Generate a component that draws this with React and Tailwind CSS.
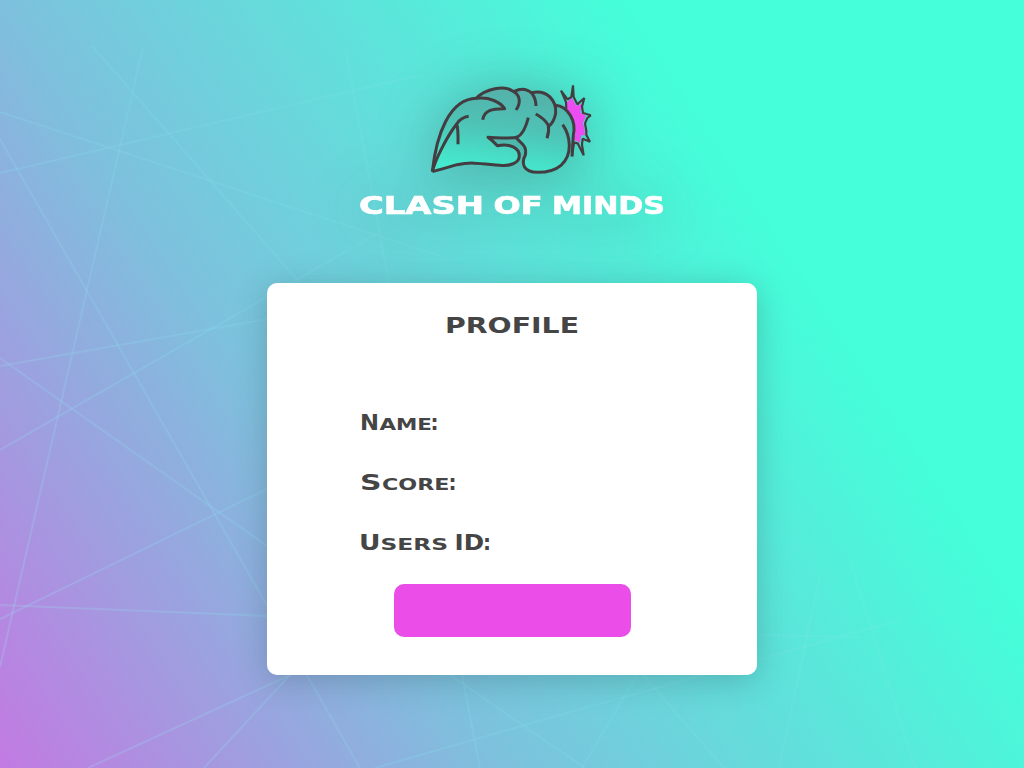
const TITLE = [
  { t: 'CLASH', x: 0, w: 125 },
  { t: 'OF', x: 134.5, w: 49 },
  { t: 'MINDS', x: 193, w: 113 },
];

const FIELDS = [
  { key: 'name', width: 78, runs: [
    { t: 'N', x: 0, w: 19, big: true }, { t: 'ame', x: 19.5, w: 52.5 }, { t: ':', x: 70.5, w: 8, big: true },
  ] },
  { key: 'score', width: 96, runs: [
    { t: 'S', x: 0, w: 21.5, big: true }, { t: 'core', x: 22, w: 67.5 }, { t: ':', x: 88.5, w: 8, big: true },
  ] },
  { key: 'id', width: 130, runs: [
    { t: 'U', x: -1, w: 21.5, big: true }, { t: 'sers', x: 20.5, w: 67.5 }, { t: 'ID', x: 94.5, w: 29.5, big: true }, { t: ':', x: 123, w: 8, big: true },
  ] },
];

const LINES = [
  [0, 112, 440, 256], [0, 173, 420, 75], [0, 139, 360, 768], [143, 47, 0, 667],
  [92, 46, 300, 283], [345, 47, 389, 283], [0, 450, 378, 233], [0, 366, 267, 319],
  [0, 358, 267, 546], [0, 619, 267, 489], [0, 605, 267, 616], [88, 768, 290, 675],
  [204, 768, 290, 675], [450, 675, 585, 768], [462, 675, 480, 768], [582, 768, 637, 675],
  [643, 675, 724, 768], [375, 768, 560, 715], [560, 715, 900, 620], [779, 768, 820, 575],
  [850, 560, 915, 768], [757, 635, 860, 637],
];

function Backdrop() {
  return (
    <svg className="absolute inset-0 h-full w-full" viewBox="0 0 1024 768" preserveAspectRatio="none" fill="none" aria-hidden="true">
      <defs>
        <linearGradient id="fade" gradientUnits="userSpaceOnUse" x1="0" y1="768" x2="870" y2="200">
          <stop offset="0" stopColor="#a8c4f0" stopOpacity="0.32" />
          <stop offset="0.5" stopColor="#7ad8e4" stopOpacity="0.34" />
          <stop offset="1" stopColor="#74f8df" stopOpacity="0.14" />
        </linearGradient>
      </defs>
      {LINES.map(([x1, y1, x2, y2], i) => (
        <line key={i} x1={x1} y1={y1} x2={x2} y2={y2} stroke="url(#fade)" strokeWidth="2" />
      ))}
    </svg>
  );
}

function BrainLogo() {
  return (
    <svg className="h-[110px] w-[190px] overflow-visible" viewBox="0 0 570 330" fill="none" aria-label="Clash of Minds">
      <defs>
        <linearGradient id="lobe" gradientUnits="userSpaceOnUse" x1="300" y1="40" x2="270" y2="285">
          <stop offset="0" stopColor="#55b0a9" />
          <stop offset="0.5" stopColor="#4ec3b6" />
          <stop offset="1" stopColor="#45e9cd" />
        </linearGradient>
      </defs>
      <path fill="#ed4df0" d="M439 99 438 84 456 69 469 92 486 86 481 112 498 123 489 143 494 166 495 181 483 181 480 203 465 195 460 200Q475 148 439 99Z" />
      <path
        fill="url(#lobe)"
        d="M37 290C52 180 86 76 170 70C195 43 255 29 283 49C302 37 328 44 340 52C376 42 404 64 410 91C450 95 465 145 458 190C457 255 420 293 353 292C309 291 303 265 316 236C320 213 303 202 289 189L204 187Q219 198 230 212C270 204 298 219 298 242C298 267 269 274 239 271C190 268 165 258 111 270Q75 280 37 290Z"
      />
      <g stroke="#433d41" strokeWidth="9" strokeLinecap="butt" strokeLinejoin="round">
        <path d="M37 290C49 180 87 72 170 70C210 66 240 81 254 101C216 100 193 107 188 134" />
        <path d="M37 290C47 250 82 183 110 147Q123 127 146 124M110 147Q115 160 114 208" />
        <path d="M167 71C199 39 253 32 276 47C302 59 303 84 288 105" />
        <path d="M283 49C305 38 323 43 336 55Q348 72 348 93M335 53C381 42 410 77 407 115Q402 142 387 153M347 117Q373 130 385 151Q388 169 381 190" />
        <path d="M406 91C447 94 469 142 460 180L456 244M428 149Q447 176 448 211C448 263 413 292 353 292C309 291 303 265 316 240C322 211 302 204 289 189" />
        <path d="M325 128C315 166 302 190 280 188Q242 191 204 187Q219 198 232 212C271 204 298 219 298 242C298 265 268 274 239 271C185 266 155 260 111 269Q75 280 37 290" />
      </g>
      <path stroke="#433d41" strokeWidth="6.5" strokeLinejoin="bevel" strokeLinecap="butt" d="M439 101 438 81 423 47 443 73 454 66 459 31 461 66 472 88 493 69 486 95 489 114 512 121 502 129 495 145 499 168 499 180 510 200 488 191 486 209 491 241 473 205 462 203 456 244" />
    </svg>
  );
}

function Words({ runs, size, smallSize, className }) {
  return runs.map((r) => (
    <text
      key={r.x}
      x={r.x}
      y="19"
      textLength={r.w}
      lengthAdjust="spacingAndGlyphs"
      fontSize={r.big || !smallSize ? size : smallSize}
      className={className}
    >
      {r.t}
    </text>
  ));
}

export default function App() {
  return (
    <div className="relative h-screen min-h-[768px] overflow-hidden bg-[linear-gradient(57deg,#c27ae2_0%,#7ec0dd_32.6%,#44ffd9_74%)] font-['DejaVu_Sans',sans-serif]">
      <Backdrop />
      <main className="relative flex flex-col items-center pt-[75px]">
        <header className="flex flex-col items-center drop-shadow-[0_4px_30px_rgba(50,50,50,0.36)]">
          <div className="pl-[6px]"><BrainLogo /></div>
          <h1 className="mt-[10px]">
            <svg className="block h-[24px] w-[306px] overflow-visible">
              <Words runs={TITLE} size={25} className="fill-white stroke-white stroke-[0.7px] font-bold" />
            </svg>
          </h1>
        </header>
        <section className="mt-[64px] flex h-[392px] w-[490px] flex-col items-center rounded-[10px] bg-white pt-[31px] shadow-[0_5px_32px_rgba(30,50,60,0.25)]">
          <h2>
            <svg className="block h-[24px] w-[132px] overflow-visible">
              <Words runs={[{ t: 'PROFILE', x: -1, w: 134 }]} size={20.5} className="fill-[#454545] font-bold" />
            </svg>
          </h2>
          <div className="mt-[73px] flex w-[304px] flex-col gap-[36px]">
            {FIELDS.map(({ key, width, runs }) => (
              <svg key={key} className="block h-[24px] overflow-visible" style={{ width }}>
                <Words runs={runs} size={20.5} smallSize={15.5} className="fill-[#454545] font-bold uppercase" />
              </svg>
            ))}
          </div>
          <button type="button" aria-label="Profile action" className="mt-[29px] h-[53px] w-[237px] shrink-0 rounded-[10px] bg-[#ea4de8]" />
        </section>
      </main>
    </div>
  );
}
